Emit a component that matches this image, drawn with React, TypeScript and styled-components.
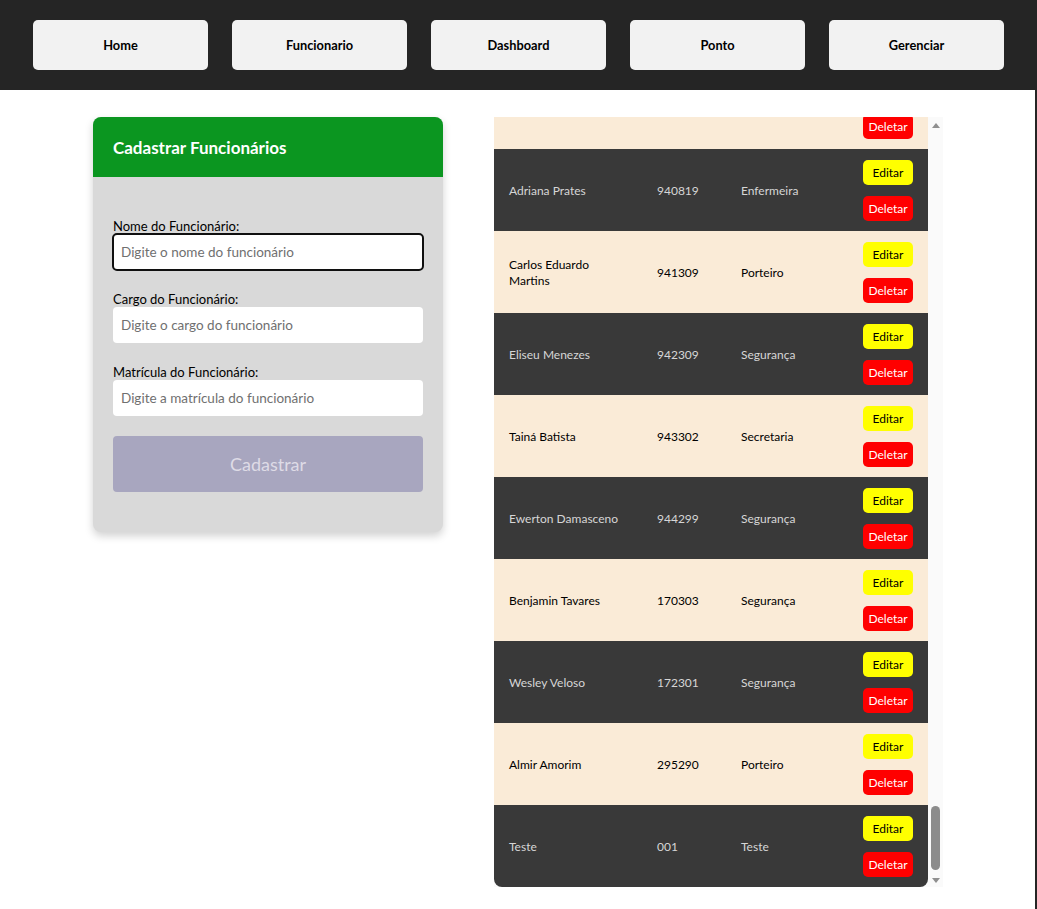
import React, { useLayoutEffect, useRef, useState } from "react";
import styled, { createGlobalStyle } from "styled-components";

const Global = createGlobalStyle`
  html, body { margin: 0; padding: 0; background: #252525; }
  body { font-family: "Segoe UI", Lato, "Noto Sans", sans-serif; }
  * { box-sizing: border-box; }
`;

const Nav = styled.nav`
  display: flex;
  justify-content: center;
  gap: 24px;
  height: 90px;
  padding: 20px 0;
  background: #252525;
`;

const NavButton = styled.button`
  width: 175px;
  height: 50px;
  border: none;
  border-radius: 5px;
  background: #f2f2f2;
  color: #000;
  font-family: inherit;
  font-size: 12.8px;
  font-weight: 700;
  cursor: pointer;
`;

const Main = styled.main`
  display: flex;
  justify-content: center;
  align-items: flex-start;
  gap: 51px;
  margin-right: 2px;
  padding: 27px 0 22px 1px;
  background: #fff;
  min-height: 819px;
`;

const Card = styled.section`
  width: 350px;
  border-radius: 8px;
  overflow: hidden;
  background: #d9d9d9;
  box-shadow: 0 4px 8px rgba(0, 0, 0, 0.18);
`;

const CardHeader = styled.header`
  height: 60px;
  display: flex;
  align-items: center;
  padding: 0 20px;
  background: #0b9620;
  color: #fff;
  font-size: 17px;
  font-weight: 700;
`;

const Form = styled.form`
  display: flex;
  flex-direction: column;
  gap: 20px;
  padding: 40px 20px;
`;

const Field = styled.label`
  display: flex;
  flex-direction: column;
  padding-top: 2px;
  font-size: 13px;
  line-height: 15px;
  color: #000;
`;

const Input = styled.input<{ $active?: boolean }>`
  height: 36px;
  padding: 0 8px;
  border: none;
  border-radius: 4px;
  background: #fff;
  font-family: inherit;
  font-size: 13.5px;
  color: #000;
  outline: ${(p) => (p.$active ? "2px solid #101010" : "none")};
  outline-offset: -1px;
  &::placeholder { color: #707070; }
  &:focus { outline: 2px solid #101010; }
`;

const Submit = styled.button`
  height: 56px;
  border: none;
  border-radius: 4px;
  background: #a8a6bf;
  color: #dedbe6;
  font-family: inherit;
  font-size: 18px;
`;

const ListPanel = styled.div`
  display: flex;
  height: 770px;
  background: #fafafa;
`;

const Viewport = styled.div`
  width: 434px;
  height: 100%;
  overflow-y: scroll;
  scrollbar-width: none;
  &::-webkit-scrollbar { display: none; }
`;

const ScrollBar = styled.div`
  width: 15px;
  display: flex;
  flex-direction: column;
  align-items: center;
  background: #fafafa;
`;

const Arrow = styled.div<{ $dir: "up" | "down" }>`
  height: 14px;
  width: 100%;
  display: flex;
  justify-content: center;
  align-items: ${(p) => (p.$dir === "up" ? "flex-start" : "flex-end")};
  padding: ${(p) => (p.$dir === "up" ? "6px 0 0" : "0 0 4px")};
  &::before {
    content: "";
    width: 0;
    height: 0;
    border-left: 4px solid transparent;
    border-right: 4px solid transparent;
    ${(p) =>
      p.$dir === "up"
        ? "border-bottom: 5px solid #8f8f8f;"
        : "border-top: 5px solid #8f8f8f;"}
  }
`;

const Track = styled.div`
  flex: 1;
  width: 100%;
  display: flex;
  flex-direction: column;
  align-items: center;
  padding-bottom: 3px;
`;

const Thumb = styled.div`
  width: 9px;
  border-radius: 5px;
  background: #8c8c8c;
`;

const Table = styled.div`
  width: 434px;
  border-radius: 8px;
  overflow: hidden;
`;

const Row = styled.div<{ $dark: boolean }>`
  display: grid;
  grid-template-columns: 148px 84px 122px 80px;
  align-items: center;
  height: 82px;
  background: ${(p) => (p.$dark ? "#393939" : "#faebd7")};
  color: ${(p) => (p.$dark ? "#d6d6d6" : "#000")};
  font-size: 12px;
  line-height: 16px;
`;

const Cell = styled.div`
  padding: 2px 15px 0;
`;

const Actions = styled.div`
  display: flex;
  flex-direction: column;
  gap: 11px;
  padding: 0 15px;
`;

const ActionButton = styled.button<{ $kind: "edit" | "delete" }>`
  width: 50px;
  height: 25px;
  padding: 0;
  border: none;
  border-radius: 5px;
  background: ${(p) => (p.$kind === "edit" ? "#ffff00" : "#ff0000")};
  color: ${(p) => (p.$kind === "edit" ? "#000" : "#fff")};
  font-family: inherit;
  font-size: 12px;
  cursor: pointer;
`;

type Emp = { nome: string; matricula: string; cargo: string };

const firstNames = ["Ana", "Bruno", "Camila", "Diego", "Fernanda", "Gustavo", "Helena", "Igor", "Juliana", "Lucas", "Mariana", "Rafael"];
const lastNames = ["Silva", "Souza", "Lima", "Costa", "Rocha", "Alves", "Pereira", "Gomes", "Ribeiro", "Barros"];
const cargos = ["Segurança", "Porteiro", "Enfermeira", "Secretaria", "Recepção"];

const filler: Emp[] = Array.from({ length: 99 }, (_, i) => ({
  nome: `${firstNames[i % firstNames.length]} ${lastNames[(i * 3) % lastNames.length]}`,
  matricula: String(900000 + i * 137),
  cargo: cargos[i % cargos.length],
}));

const visible: Emp[] = [
  { nome: "Adriana Prates", matricula: "940819", cargo: "Enfermeira" },
  { nome: "Carlos Eduardo Martins", matricula: "941309", cargo: "Porteiro" },
  { nome: "Eliseu Menezes", matricula: "942309", cargo: "Segurança" },
  { nome: "Tainá Batista", matricula: "943302", cargo: "Secretaria" },
  { nome: "Ewerton Damasceno", matricula: "944299", cargo: "Segurança" },
  { nome: "Benjamin Tavares", matricula: "170303", cargo: "Segurança" },
  { nome: "Wesley Veloso", matricula: "172301", cargo: "Segurança" },
  { nome: "Almir Amorim", matricula: "295290", cargo: "Porteiro" },
  { nome: "Teste", matricula: "001", cargo: "Teste" },
];

const employees = [...filler, ...visible];

export default function App() {
  const viewRef = useRef<HTMLDivElement>(null);
  const trackRef = useRef<HTMLDivElement>(null);
  const [thumb, setThumb] = useState({ top: 0, height: 40 });

  const measure = () => {
    const el = viewRef.current;
    const tr = trackRef.current;
    if (!el || !tr) return;
    const track = tr.clientHeight - 3;
    const height = Math.max(20, (track * el.clientHeight) / el.scrollHeight);
    const max = el.scrollHeight - el.clientHeight;
    const top = max > 0 ? ((track - height) * el.scrollTop) / max : 0;
    setThumb({ top, height });
  };

  useLayoutEffect(() => {
    const el = viewRef.current;
    if (el) el.scrollTop = el.scrollHeight;
    measure();
  }, []);

  const total = employees.length;

  return (
    <>
      <Global />
      <Nav>
        {["Home", "Funcionario", "Dashboard", "Ponto", "Gerenciar"].map((t) => (
          <NavButton key={t}>{t}</NavButton>
        ))}
      </Nav>
      <Main>
        <Card>
          <CardHeader>Cadastrar Funcionários</CardHeader>
          <Form onSubmit={(e) => e.preventDefault()}>
            <Field>
              Nome do Funcionário:
              <Input $active placeholder="Digite o nome do funcionário" />
            </Field>
            <Field>
              Cargo do Funcionário:
              <Input placeholder="Digite o cargo do funcionário" />
            </Field>
            <Field>
              Matrícula do Funcionário:
              <Input placeholder="Digite a matrícula do funcionário" />
            </Field>
            <Submit type="submit">Cadastrar</Submit>
          </Form>
        </Card>
        <ListPanel>
          <Viewport ref={viewRef} onScroll={measure}>
            <Table>
              {employees.map((e, i) => (
                <Row key={i} $dark={(total - 1 - i) % 2 === 0}>
                  <Cell>{e.nome}</Cell>
                  <Cell>{e.matricula}</Cell>
                  <Cell>{e.cargo}</Cell>
                  <Actions>
                    <ActionButton $kind="edit">Editar</ActionButton>
                    <ActionButton $kind="delete">Deletar</ActionButton>
                  </Actions>
                </Row>
              ))}
            </Table>
          </Viewport>
          <ScrollBar>
            <Arrow $dir="up" />
            <Track ref={trackRef}>
              <Thumb style={{ marginTop: thumb.top, height: thumb.height }} />
            </Track>
            <Arrow $dir="down" />
          </ScrollBar>
        </ListPanel>
      </Main>
    </>
  );
}
